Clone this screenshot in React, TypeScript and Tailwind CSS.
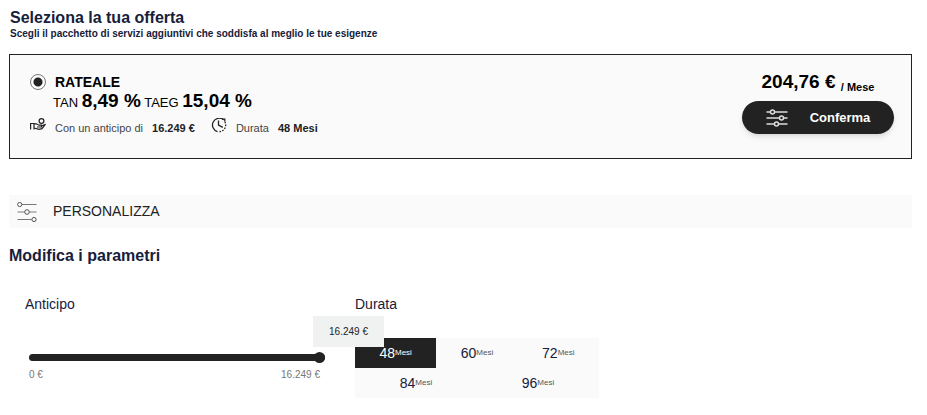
import React, { useState } from 'react'

const MAX_DEPOSIT = 16249
const SHORT_TERMS = [48, 60, 72]
const LONG_TERMS = [84, 96]

const euro = (n: number) => `${String(n).replace(/\B(?=(\d{3})+$)/g, '.')} €`

function HandCoinIcon() {
  return (
    <svg className="w-4 h-4 shrink-0" viewBox="0 0 16 16" fill="none" stroke="#222" strokeWidth="1.2" aria-hidden="true">
      <circle cx="11.5" cy="3" r="2.4" />
      <path d="M0.6 11.5V5.5H4V11.5M4 5.8H6.5L9 7.2H11.5V9H7M11.5 8L15.5 6.2L12 10.6L9 11.4L4 10" />
    </svg>
  )
}

function ClockIcon() {
  return (
    <svg className="w-4 h-4 shrink-0" viewBox="0 0 16 16" fill="none" stroke="#222" strokeWidth="1.3" aria-hidden="true">
      <path d="M12.5 1.7A6.8 6.8 0 1 0 6.5 13.6" />
      <path d="M8.5 13.7A6.8 6.8 0 0 0 13.3 2.8" strokeDasharray="1.6 1.3" />
      <path d="M11 1.2H13.8V3.6M7.5 2.5V7L11.8 9.4" />
    </svg>
  )
}

function SlidersIcon() {
  return (
    <svg className="w-[22px] h-[18px]" viewBox="0 0 22 18" fill="none" stroke="#ddd" strokeWidth="1.5" aria-hidden="true">
      <path d="M0.5 3H4.5M8.5 3H21.5M0.5 9H13.5M17.5 9H21.5M0.5 15H8.5M12.5 15H21.5" />
      <circle cx="6.5" cy="3" r="2" />
      <circle cx="15.5" cy="9" r="2" />
      <circle cx="10.5" cy="15" r="2" />
    </svg>
  )
}

function CustomizeIcon() {
  return (
    <svg className="w-5 h-5" viewBox="0 0 20 20" fill="none" stroke="#555" strokeWidth="1" aria-hidden="true">
      <path d="M5 2.5H19.5M0.5 17.5H14.5" stroke="#777" />
      <path d="M0.5 10H7.5M12.5 10H19.5" stroke="#bbb" strokeWidth="2" />
      <circle cx="2.7" cy="2.5" r="2.1" />
      <circle cx="10" cy="10" r="2.3" />
      <circle cx="17" cy="17.5" r="2.1" />
    </svg>
  )
}

function OfferCard({ deposit, term }: { deposit: number; term: number }) {
  return (
    <section className="flex items-start justify-between mt-[14px] pl-5 pr-[17px] pt-[17px] pb-5 border border-[#222] bg-[#fafafa]">
      <div>
        <div className="flex items-center gap-[9px] h-5">
          <input type="radio" id="rateale" name="offerta" defaultChecked
            className="appearance-none w-4 h-4 rounded-full border border-[#777] bg-[radial-gradient(circle,#222_4px,#fafafa_5px)]" />
          <label htmlFor="rateale" className="text-[14px] leading-5 font-bold text-black">RATEALE</label>
        </div>
        <p className="pl-[23px] text-[13px] leading-[18px] text-black">
          TAN <b className="text-[19px]">8,49 %</b> TAEG <b className="text-[19px]">15,04 %</b>
        </p>
        <div className="flex items-start mt-[6px] text-[11px] leading-5 text-[#444]">
          <HandCoinIcon />
          <span className="ml-[9px]">Con un anticipo di</span>
          <b className="ml-[9px] mr-4 text-[#222]">{euro(deposit)}</b>
          <ClockIcon />
          <span className="ml-[9px]">Durata</span>
          <b className="ml-[9px] text-[#222]">{term} Mesi</b>
        </div>
      </div>
      <div className="flex flex-col items-center">
        <p className="text-[19px] leading-5 font-bold text-black">
          204,76 € <sub className="text-[11px]">/ Mese</sub>
        </p>
        <button type="button"
          className="flex items-center justify-center gap-[22px] w-[152px] h-[33px] mt-[9px] rounded-full bg-[#222] text-white text-[13px] font-bold shadow-md">
          <SlidersIcon />
          Conferma
        </button>
      </div>
    </section>
  )
}

function TermButton({ months, active, onClick }: { months: number; active: boolean; onClick: () => void }) {
  return (
    <button type="button" aria-pressed={active} onClick={onClick}
      className={`flex flex-1 items-center justify-center h-[30px] ${active ? 'bg-[#222] text-white' : 'text-[#17203a]'}`}>
      <span className="text-[14px]">{months}</span>
      <span className={`text-[8px] ${active ? 'text-white' : 'text-[#555]'}`}>Mesi</span>
    </button>
  )
}

export default function App() {
  const [deposit, setDeposit] = useState(MAX_DEPOSIT)
  const [term, setTerm] = useState(48)

  return (
    <main className="pl-[9px] pr-[15px] pt-2 pb-4 bg-white text-[#17203a] font-['Liberation_Sans',Arial,sans-serif]">
      <h1 className="pl-px text-[16px] leading-5 font-bold">Seleziona la tua offerta</h1>
      <p className="pl-px text-[10px] leading-3 font-bold">
        Scegli il pacchetto di servizi aggiuntivi che soddisfa al meglio le tue esigenze
      </p>

      <OfferCard deposit={deposit} term={term} />

      <div className="flex items-center gap-4 h-[33px] mt-9 px-2 bg-[#fafafa] text-[14px] text-[#222]">
        <CustomizeIcon />
        <h2>PERSONALIZZA</h2>
      </div>

      <h2 className="mt-[18px] text-[16px] leading-5 font-bold">Modifica i parametri</h2>

      <div className="grid grid-cols-[330fr_244fr_313fr] mt-7 pl-4">
        <div>
          <label htmlFor="anticipo" className="block text-[14px] leading-5">Anticipo</label>
          <div className="relative mt-10 ml-1 mr-[30px]">
            <output htmlFor="anticipo"
              className="absolute z-10 bottom-full mb-[7px] -right-[59px] w-[71px] h-[31px] bg-[#f0f2f1] text-center text-[10px] leading-[31px] text-[#222]">
              {euro(deposit)}
            </output>
            <input id="anticipo" type="range" min={0} max={MAX_DEPOSIT} value={deposit}
              onChange={e => setDeposit(Number(e.target.value))}
              className="block appearance-none w-full h-[7px] rounded-full bg-[#222] [&::-webkit-slider-thumb]:appearance-none [&::-webkit-slider-thumb]:w-[11px] [&::-webkit-slider-thumb]:h-[11px] [&::-webkit-slider-thumb]:rounded-full [&::-webkit-slider-thumb]:bg-[#222]" />
            <div className="flex justify-between mt-[6px] pr-[5px] text-[10px] leading-4 text-[#777]">
              <span>0 €</span>
              <span>{euro(MAX_DEPOSIT)}</span>
            </div>
          </div>
        </div>

        <div>
          <h3 className="text-[14px] leading-5">Durata</h3>
          <div className="mt-6 bg-[#fafafa]">
            <div className="flex">
              {SHORT_TERMS.map(m => <TermButton key={m} months={m} active={m === term} onClick={() => setTerm(m)} />)}
            </div>
            <div className="flex">
              {LONG_TERMS.map(m => <TermButton key={m} months={m} active={m === term} onClick={() => setTerm(m)} />)}
            </div>
          </div>
        </div>
      </div>
    </main>
  )
}
